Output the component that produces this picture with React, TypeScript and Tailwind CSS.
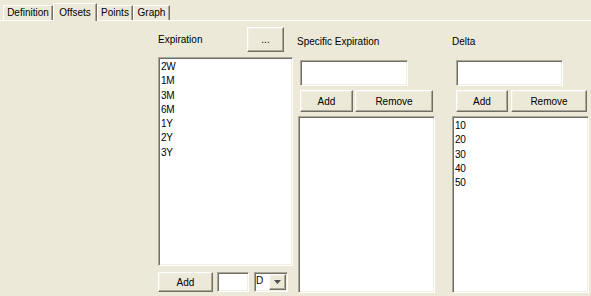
import React from "react";

const sunken =
  "border border-t-[#ACA899] border-l-[#ACA899] border-r-white border-b-white shadow-[inset_1px_1px_0_#716F64,inset_-1px_-1px_0_#F1EFE2] bg-white";
const raised =
  "border border-t-white border-l-white border-r-[#716F64] border-b-[#716F64] shadow-[inset_-1px_-1px_0_#ACA899,inset_1px_1px_0_#F1EFE2] bg-[#ECE9D8] flex items-center justify-center text-[10px] text-black";

function Tab({ label, selected, w }: { label: string; selected?: boolean; w: string }) {
  return (
    <div
      className={
        (selected
          ? "h-[18px] -mb-px z-10 bg-[#ECE9D8] "
          : "h-[15px] bg-[#ECE9D8] ") +
        w +
        " border-t border-l border-t-white border-l-white border-r border-r-[#716F64] shadow-[inset_-1px_0_0_#ACA899] flex items-center justify-center text-[10px] leading-none"
      }
    >
      {label}
    </div>
  );
}

function ListBox({ items, cls }: { items: string[]; cls: string }) {
  return (
    <div className={sunken + " " + cls + " pt-[2px] pl-[2px]"}>
      {items.map((t) => (
        <div key={t} className="text-[10px] leading-[14.25px] tracking-[-0.3px]">
          {t}
        </div>
      ))}
    </div>
  );
}

export default function App() {
  return (
    <div
      className="w-[591px] h-[296px] bg-[#ECE9D8] text-black overflow-hidden"
      style={{ fontFamily: '"Liberation Sans", Arial, sans-serif' }}
    >
      <div className="h-[21px] flex items-end pl-[3px] border-b border-b-white">
        <Tab label="Definition" w="w-[50px]" />
        <Tab label="Offsets" w="w-[44px]" selected />
        <Tab label="Points" w="w-[36px]" />
        <Tab label="Graph" w="w-[37px]" />
      </div>
      <div className="flex pl-[158px]">
        {/* Expiration column */}
        <div className="w-[135px] flex flex-col">
          <div className="h-[36px] flex items-start">
            <div className="text-[10px] leading-[12px] mt-[13px]">Expiration</div>
            <div className={raised + " ml-auto mr-[9px] mt-[6px] w-[37px] h-[25px]"}>...</div>
          </div>
          <ListBox items={["2W", "1M", "3M", "6M", "1Y", "2Y", "3Y"]} cls="h-[209px] w-[135px]" />
          <div className="mt-[6px] flex">
            <div className={raised + " w-[55px] h-[20px]"}>Add</div>
            <div className={sunken + " ml-[4px] w-[32px] h-[20px]"}></div>
            <div className={sunken + " ml-[5px] w-[34px] h-[20px] flex items-stretch"}>
              <div className="flex-1 text-[10px] leading-[16px] pl-[1px]">D</div>
              <div className={raised + " w-[17px] my-[1px] mr-[1px]"}>
                <svg width="7" height="4" viewBox="0 0 7 4">
                  <path d="M0 0H7L3.5 4Z" fill="#4d4d4d" />
                </svg>
              </div>
            </div>
          </div>
        </div>
        {/* Specific Expiration column */}
        <div className="ml-[5px] w-[137px] flex flex-col">
          <div className="text-[10px] leading-[12px] mt-[15px] -ml-[1px]">Specific Expiration</div>
          <div className={sunken + " mt-[12px] ml-[2px] w-[108px] h-[26px]"}></div>
          <div className="mt-[4px] ml-[2px] flex gap-[2px]">
            <div className={raised + " w-[53px] h-[22px]"}>Add</div>
            <div className={raised + " w-[78px] h-[22px]"}>Remove</div>
          </div>
          <ListBox items={[]} cls="mt-[4px] h-[177px] w-[137px]" />
        </div>
        {/* Delta column */}
        <div className="ml-[17px] w-[137px] flex flex-col">
          <div className="text-[10px] leading-[12px] mt-[15px]">Delta</div>
          <div className={sunken + " mt-[12px] ml-[4px] w-[107px] h-[26px]"}></div>
          <div className="mt-[4px] ml-[4px] flex gap-[3px]">
            <div className={raised + " w-[52px] h-[22px]"}>Add</div>
            <div className={raised + " w-[76px] h-[22px]"}>Remove</div>
          </div>
          <ListBox items={["10", "20", "30", "40", "50"]} cls="mt-[4px] h-[177px] w-[137px]" />
        </div>
      </div>
    </div>
  );
}
